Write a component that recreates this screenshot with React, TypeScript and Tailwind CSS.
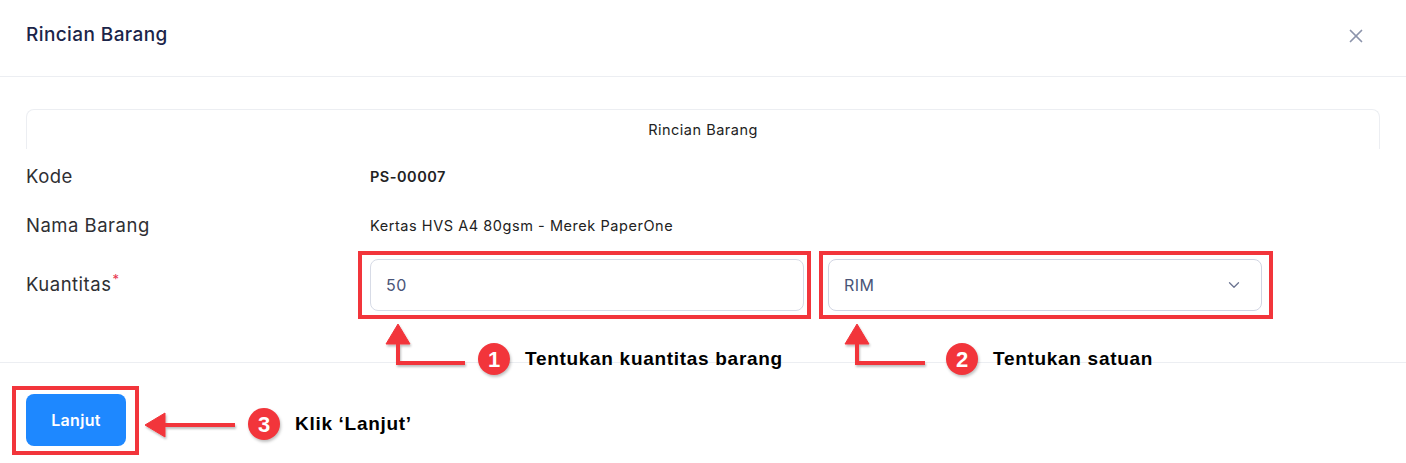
import { ChevronDown, X } from 'lucide-react'

const RED = '#f2353b'

export default function App() {
  return (
    <main
      className="relative w-[1406px] h-[463px] bg-white overflow-hidden"
      style={{ fontFamily: 'Inter, "Noto Sans", sans-serif' }}
    >
      {/* Header */}
      <header className="h-[77px] px-[26px] pb-[5px] flex items-center justify-between border-b border-[#eceef2]">
        <h1 className="text-[19px] font-medium text-[#1b2549] tracking-[0.4px]">Rincian Barang</h1>
        <button className="mr-[13px] text-[#8c94ab]" aria-label="Tutup">
          <X size={22} strokeWidth={1.9} />
        </button>
      </header>

      {/* Body */}
      <section className="px-[26px] pt-[32px] h-[285px]">
        <div className="h-[40px] rounded-t-lg border border-b-0 border-[#eceef2] flex items-center justify-center text-[14.5px] tracking-[0.5px] text-[#222]">
          Rincian Barang
        </div>

        <div className="grid grid-cols-[344px_1fr] pt-[1px]">
          <div className="h-[54px] flex items-center text-[18.5px] tracking-[0.5px] text-[#2f2f33]">Kode</div>
          <div className="h-[54px] flex items-center text-[14.5px] tracking-[0.5px] font-semibold text-[#222]">PS-00007</div>

          <div className="h-[44px] flex items-center text-[18.5px] tracking-[0.5px] text-[#2f2f33]">Nama Barang</div>
          <div className="h-[44px] flex items-center text-[14.5px] tracking-[0.55px] text-[#222]">
            Kertas HVS A4 80gsm - Merek PaperOne
          </div>

          <div className="mt-[11px] h-[52px] flex items-center text-[18.5px] tracking-[0.5px] text-[#2f2f33]">
            Kuantitas<sup className="text-[#e8344e] text-[13px] -top-[6px] ml-[1px]">*</sup>
          </div>
          <div className="mt-[11px] flex gap-[24px]">
            <div className="relative">
              <input
                defaultValue="50"
                className="w-[434px] h-[52px] rounded-lg border border-[#d7dbe6] px-[15px] text-[16px] tracking-[0.4px] text-[#4a5578] outline-none"
              />
              <div className="absolute -left-[12px] -right-[7px] -top-[8px] -bottom-[8px] border-4 border-[#f2353b] pointer-events-none" />
            </div>
            <div className="relative">
              <div className="w-[434px] h-[52px] rounded-lg border border-[#d0d4e2] px-[15px] flex items-center justify-between text-[16px] tracking-[0.4px] text-[#4a5578]">
                <span>RIM</span>
                <ChevronDown size={18} strokeWidth={1.7} className="text-[#6b7491] mr-[3px]" />
              </div>
              <div className="absolute -left-[9px] -right-[11px] -top-[8px] -bottom-[8px] border-4 border-[#f2353b] pointer-events-none" />
            </div>
          </div>
        </div>
      </section>

      {/* Footer */}
      <footer className="border-t border-[#eceef2] px-[26px] pt-[31px]">
        <div className="relative w-fit">
          <button className="w-[100px] h-[52px] rounded-lg bg-[#1e88ff] text-white text-[16px] tracking-[0.3px] font-semibold">
            Lanjut
          </button>
          <div className="absolute -left-[14px] -right-[13px] -top-[8px] -bottom-[9px] border-4 border-[#f2353b] pointer-events-none" />
        </div>
      </footer>

      {/* Annotations */}
      <svg className="absolute inset-0 pointer-events-none" width="1406" height="463" viewBox="0 0 1406 463">
        <defs>
          <filter id="sh" x="-20%" y="-20%" width="140%" height="160%">
            <feDropShadow dx="1" dy="2" stdDeviation="1.2" floodColor="#000" floodOpacity="0.25" />
          </filter>
        </defs>
        <g fill={RED} stroke={RED} filter="url(#sh)">
          <path d="M398 341 V363 H465" fill="none" strokeWidth="4" />
          <path d="M398 324 L386 344 L410 344 Z" strokeWidth="1" />
          <path d="M857 341 V363 H925" fill="none" strokeWidth="4" />
          <path d="M857 324 L845 344 L869 344 Z" strokeWidth="1" />
          <path d="M162 425 H235" fill="none" strokeWidth="4" />
          <path d="M145 425 L165 413 L165 437 Z" strokeWidth="1" />
        </g>
      </svg>

      <Step n="1" x={494} y={359} text="Tentukan kuantitas barang" />
      <Step n="2" x={962} y={359} text="Tentukan satuan" />
      <Step n="3" x={264} y={424} text="Klik ‘Lanjut’" />
    </main>
  )
}

function Step({ n, x, y, text }: { n: string; x: number; y: number; text: string }) {
  return (
    <div
      className="absolute flex items-center gap-[15px] -translate-y-1/2"
      style={{ left: x - 16, top: y, fontFamily: '"Liberation Sans", Arial, sans-serif' }}
    >
      <span className="w-[32px] h-[32px] rounded-full bg-[#f2353b] text-white text-[22px] font-bold flex items-center justify-center shadow-[1px_2px_3px_rgba(0,0,0,0.25)]">
        {n}
      </span>
      <span className="text-[19px] tracking-[0.7px] font-bold text-black whitespace-nowrap">{text}</span>
    </div>
  )
}
